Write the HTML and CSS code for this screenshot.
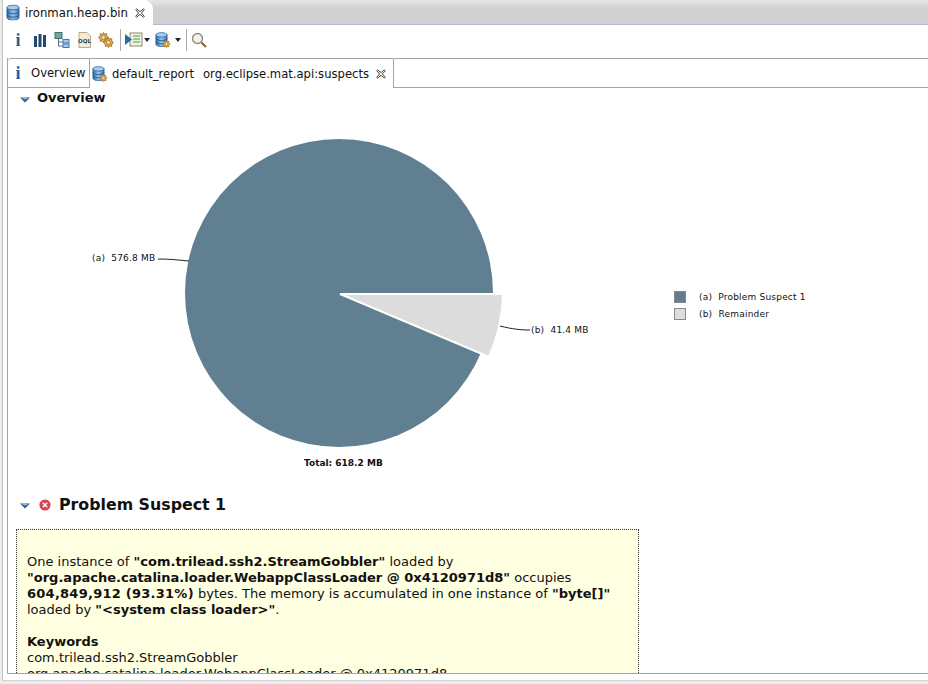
FILE: index.html
```html
<!DOCTYPE html>
<html lang="en">
<head>
<meta charset="utf-8">
<title>ironman.heap.bin</title>
<link rel="stylesheet" href="styles.css">
</head>
<body>
<svg class="defs" width="0" height="0" aria-hidden="true">
  <defs>
    <linearGradient id="db" x1="0" y1="0" x2="1" y2="0"><stop offset="0" stop-color="#2f6fb5"/><stop offset=".5" stop-color="#9cc4ea"/><stop offset="1" stop-color="#3a78bd"/></linearGradient>
    <symbol id="close" viewBox="0 0 10 10"><path d="M1.5 .8 L5 3.6 8.5 .8 9.3 1.6 6.4 5 9.3 8.4 8.5 9.2 5 6.4 1.5 9.2 .7 8.4 3.6 5 .7 1.6Z" fill="#fff" stroke="#444" stroke-width="1"/></symbol>
    <symbol id="cyl" viewBox="0 0 14 16">
      <path d="M1 3v10c0 1.6 2.7 2.6 6 2.6s6-1 6-2.6V3Z" fill="url(#db)" stroke="#24598f" stroke-width=".8"/>
      <ellipse cx="7" cy="3" rx="6" ry="2.4" fill="#a9cdf0" stroke="#24598f" stroke-width=".8"/>
      <path d="M1 6.6c0 1.6 2.7 2.6 6 2.6s6-1 6-2.6M1 10c0 1.6 2.7 2.6 6 2.6s6-1 6-2.6" fill="none" stroke="#1f4f86" stroke-width=".9"/>
    </symbol>
    <symbol id="gear" viewBox="0 0 10 10">
      <path d="M5 .4 6 2 7.9 1.4 8 3.4 9.6 5 8 6.6 7.9 8.6 6 8 5 9.6 4 8 2.1 8.6 2 6.6 .4 5 2 3.4 2.1 1.4 4 2Z" fill="#e6a93c" stroke="#8a6a2c" stroke-width=".7"/>
      <circle cx="5" cy="5" r="1.6" fill="#fff3cf" stroke="#8a6a2c" stroke-width=".6"/>
    </symbol>
    <symbol id="twisty" viewBox="0 0 10 6"><path d="M0 .5H10L5 5.5Z" fill="#2b5d94"/><path d="M1.5 1H8.5L5 2.5Z" fill="#9fc0e0"/></symbol>
  </defs>
</svg>

<div class="window">
  <header class="editor-tabs">
    <div class="editor-tab">
      <svg class="i-large" viewBox="0 0 14 16"><use href="#cyl"/></svg>
      <span class="editor-label">ironman.heap.bin</span>
      <svg class="x10" viewBox="0 0 10 10"><use href="#close"/></svg>
    </div>
  </header>

  <nav class="toolbar">
    <span class="info-glyph tool-i">i</span>
    <svg class="tool" viewBox="0 0 16 16"><path d="M2 4h3v11H2ZM6.500 2h3v13h-3ZM11 3h3v12h-3Z" fill="#24476f"/></svg>
    <svg class="tool" viewBox="0 0 16 16"><rect x="1" y=".5" width="7" height="6" fill="#6eb06e" stroke="#3e6f8f"/><path d="M4.500 6.500V14H9M4.500 10H9" fill="none" stroke="#5b6f80"/><rect x="9" y="7.500" width="6" height="3.500" fill="#a6cdef" stroke="#3c78b5"/><rect x="9" y="12" width="6" height="3.500" fill="#a6cdef" stroke="#3c78b5"/></svg>
    <svg class="tool" viewBox="0 0 16 16"><path d="M3 .5H11L14.500 4V15.500H3Z" fill="#f3ecd2" stroke="#b9ab82"/><text class="oql" x="8.500" y="11">OQL</text></svg>
    <svg class="tool" viewBox="0 0 16 16"><use href="#gear" x="0" y="0" width="11" height="11"/><use href="#gear" x="5" y="5" width="11" height="11"/></svg>
    <span class="sep"></span>
    <svg class="tool tool-wide" viewBox="0 0 18 16"><rect x="5" y="1" width="12" height="13" fill="#eef4e2" stroke="#8d8a62"/><path d="M8 4h7M8 7h7M8 10h7" stroke="#4c9a4c"/><path d="M0 2 7 7.500 0 13Z" fill="#1f6f9f"/></svg>
    <span class="caret caret-first"></span>
    <svg class="tool tool-db" viewBox="0 0 16 16"><use href="#cyl" x="0" y="0" width="13" height="15"/><use href="#gear" x="7" y="8" width="9" height="8"/></svg>
    <span class="caret"></span>
    <span class="sep"></span>
    <svg class="tool" viewBox="0 0 16 16"><circle cx="6.500" cy="6.500" r="5" fill="#f5f2e2" stroke="#8d8d80" stroke-width="1.400"/><path d="M10.500 10.500 15 15" stroke="#8a6a3c" stroke-width="2.200"/></svg>
  </nav>

  <div class="pane">
    <div class="pane-tabs">
      <div class="tab tab-overview"><span class="info-glyph">i</span><span>Overview</span></div>
      <div class="tab tab-active">
        <svg class="i16" viewBox="0 0 16 16"><use href="#cyl" x="0" y="0" width="13" height="15"/><use href="#gear" x="7" y="8" width="9" height="8"/></svg>
        <span class="report-name">default_report</span>
        <span>org.eclipse.mat.api:suspects</span>
        <svg class="x10" viewBox="0 0 10 10"><use href="#close"/></svg>
      </div>
      <div class="tab-rest"></div>
    </div>

    <main class="report">
      <h2 class="section-small"><svg class="twisty" viewBox="0 0 10 6"><use href="#twisty"/></svg>Overview</h2>

      <svg class="chart" viewBox="0 0 920 387" width="920" height="387">
        <circle cx="331" cy="188" r="154" fill="#607f91"/>
        <path d="M332 189H495A163 163 0 0 1 481 252Z" fill="#dcdcdc" stroke="#fff" stroke-width="2"/>
        <path d="M150 154C162 154 170 155 181 156M492 221C504 224 512 225 522 225" fill="none" stroke="#222"/>
        <text class="pie-label" x="84" y="156">(a)&#160; 576.8 MB</text>
        <text class="pie-label" x="523" y="228">(b)&#160; 41.4 MB</text>
        <text class="pie-total" x="296" y="361">Total: 618.2 MB</text>
        <rect x="666.500" y="186.500" width="11" height="11" fill="#607f91" stroke="#8a8a8a"/>
        <rect x="666.500" y="203.500" width="11" height="11" fill="#dcdcdc" stroke="#8a8a8a"/>
        <text class="pie-label" x="691" y="195">(a)&#160; Problem Suspect 1</text>
        <text class="pie-label" x="691" y="212">(b)&#160; Remainder</text>
      </svg>

      <h2 class="section-big">
        <svg class="twisty" viewBox="0 0 10 6"><use href="#twisty"/></svg>
        <svg class="err" viewBox="0 0 12 12"><circle cx="6" cy="6" r="5.600" fill="#d9414f"/><path d="M3.800 3.800 8.200 8.200M8.200 3.800 3.800 8.200" stroke="#fff" stroke-width="1.500"/></svg>
        Problem Suspect 1
      </h2>

      <section class="suspect">
        <p>One instance of <b>"com.trilead.ssh2.StreamGobbler"</b> loaded by <b>"org.apache.catalina.loader.WebappClassLoader @ 0x4120971d8"</b> occupies <b class="figure">604,849,912 (93.31%)</b> bytes. The memory is accumulated in one instance of <b>"byte[]"</b> loaded by <b>"&lt;system class loader&gt;"</b>.</p>
        <p class="keywords"><b>Keywords</b><br>com.trilead.ssh2.StreamGobbler<br>org.apache.catalina.loader.WebappClassLoader @ 0x4120971d8</p>
      </section>
    </main>
  </div>
</div>
</body>
</html>
```
FILE: styles.css
```css
* { box-sizing: border-box; }
html, body { margin: 0; height: 684px; overflow: hidden; background: #ececec; }
body { font-family: "DejaVu Sans", sans-serif; color: #111; }
.defs { position: absolute; }

.window {
  width: 928px;
  height: 681px;
  background: #fff;
  margin-left: 2px;
  border-left: 1px solid #c4c4c4;
  border-bottom: 1px solid #d4d4d4;
  display: flex;
  flex-direction: column;
  overflow: hidden;
}

.editor-tabs {
  height: 25px;
  flex: none;
  background: linear-gradient(#e6e6e6, #d0d0d0 35%, #d0d0d0);
  border-bottom: 1px solid #b4b8cc;
  display: flex;
}
.editor-tab {
  width: 150px;
  height: 25px;
  background: #fff;
  border-top-right-radius: 9px;
  display: flex;
  align-items: center;
  padding-left: 3px;
  gap: 4px;
}
.editor-label { font-size: 11.7px; color: #111; width: 107px; padding-left: 1px; }
.i-large { width: 14px; height: 17px; flex: none; }
.i16 { width: 16px; height: 16px; flex: none; }
.x10 { width: 10px; height: 10px; flex: none; }

.toolbar {
  height: 33px;
  flex: none;
  display: flex;
  align-items: center;
  padding-left: 10px;
  padding-bottom: 3px;
}
.tool { width: 16px; height: 16px; margin-right: 6px; flex: none; }
.tool-i { width: 10px; margin-right: 9px; }
.tool-wide { width: 18px; margin-right: 0; }
.tool-db { margin-right: 1px; }
.oql { font: bold 5.500px "DejaVu Sans", sans-serif; fill: #26426b; text-anchor: middle; }
.sep { width: 1px; height: 22px; background: #a9a9a9; margin: 0 4px 0 0; flex: none; }
.caret {
  width: 0;
  height: 0;
  border: 3px solid transparent;
  border-top: 4px solid #222;
  border-bottom: 0;
  margin: 0 5px 0 3px;
  flex: none;
}
.caret-first { margin-left: 1px; }
.info-glyph {
  font: bold 18px "Liberation Serif", serif;
  color: #1d5f9e;
  text-align: center;
  line-height: 16px;
}

.pane {
  flex: 1;
  min-height: 0;
  margin-left: 4px;
  margin-bottom: 6px;
  border-left: 1px solid #a3a3a3;
  border-bottom: 1px solid #a3a3a3;
  display: flex;
  flex-direction: column;
  overflow: hidden;
}
.pane-tabs { height: 30px; flex: none; display: flex; }
.tab {
  height: 30px;
  display: flex;
  align-items: center;
  font-size: 11.6px;
  color: #111;
}
.tab-overview {
  width: 82px;
  border-top: 1px solid #a3a3a3;
  border-bottom: 1px solid #a3a3a3;
  border-right: 1px solid #a3a3a3;
  border-top-left-radius: 3px;
  padding-left: 6px;
  gap: 9px;
}
.tab-overview .info-glyph { width: 8px; }
.tab-active {
  width: 303px;
  border-top: 1px solid #a3a3a3;
  padding-left: 2px;
  gap: 4px;
  white-space: pre;
}
.report-name { margin-right: 5px; }
.tab-active .x10 { margin-left: 3px; }
.tab-rest {
  flex: 1;
  height: 30px;
  border-top: 1px solid #a3a3a3;
  border-bottom: 1px solid #a3a3a3;
  border-left: 1px solid #a3a3a3;
  border-top-left-radius: 2px;
}

.report { flex: 1; min-height: 0; overflow: hidden; }
.section-small {
  margin: 0;
  height: 19px;
  display: flex;
  align-items: center;
  font-size: 13px;
  font-weight: bold;
  color: #111;
  padding-left: 12px;
}
.twisty { width: 10px; height: 6px; margin-top: 4px; flex: none; }
.section-small .twisty { margin-right: 7px; }
.chart { display: block; margin-top: -2px; }
.pie-label { font: 9px "DejaVu Sans", sans-serif; fill: #111; letter-spacing: .2px; }
.pie-total { font: bold 9px "DejaVu Sans", sans-serif; fill: #111; }

.section-big {
  margin: 0;
  height: 24px;
  display: flex;
  align-items: center;
  font-size: 15.8px;
  font-weight: bold;
  color: #111;
  padding-left: 12px;
}
.section-big .twisty { margin-right: 9px; }
.err { width: 12px; height: 12px; margin-right: 8px; margin-top: 2px; flex: none; }

.suspect {
  width: 623px;
  margin: 13px 0 0 8px;
  padding: 24px 10px 0 10px;
  background: #ffffe1;
  border: 1px dotted #333;
  font-size: 13px;
  line-height: 16px;
  height: 300px;
}
.suspect p { margin: 0; }
.suspect .keywords { margin-top: 16px; }
.figure { letter-spacing: .25px; }
```
